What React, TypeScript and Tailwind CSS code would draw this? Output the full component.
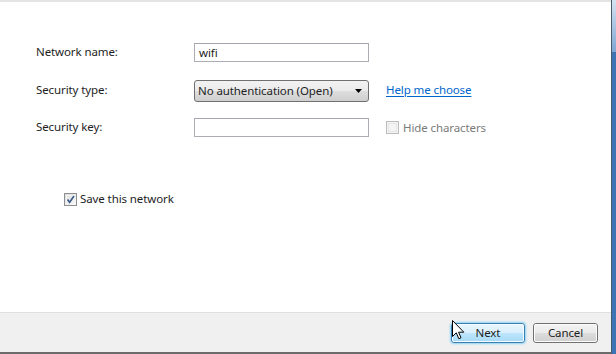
import React from "react";

const font = { fontFamily: '"Noto Sans", "Open Sans", sans-serif' };

function Checkbox({ checked, disabled }: { checked?: boolean; disabled?: boolean }) {
  return (
    <div
      className={
        "w-[13px] h-[13px] border flex items-center justify-center " +
        (disabled ? "border-[#bcbcbc] bg-[#f4f4f4]" : "border-[#8e8f8f] bg-gradient-to-br from-[#dcdcdc] to-[#fbfbfb]")
      }
    >
      <div className={"w-[9px] h-[9px] border " + (disabled ? "border-[#e6e6e6]" : "border-[#f4f4f4]")}>
        {checked && (
          <svg width="9" height="9" viewBox="0 0 9 9" className="block -mt-[1px] -ml-[1px]">
            <path d="M1.5 4.5 L3.6 7.3 L8 1" fill="none" stroke="#3c5c8a" strokeWidth="1.6" />
          </svg>
        )}
      </div>
    </div>
  );
}

export default function App() {
  return (
    <div className="w-[616px] h-[354px] flex overflow-hidden text-[11.5px] tracking-[-0.1px] text-[#1e1e1e] relative" style={font}>
      <div className="flex-1 flex flex-col bg-white">
        <div className="h-[2px] bg-[#e4e4e4]" />
        <div className="flex-1 flex flex-col pl-[36px] pt-[41px]">
          <div className="flex items-center h-[19px]">
            <div className="w-[158px] -mt-[2px]">Network name:</div>
            <div className="w-[175px] h-[19px] border border-[#abadb3] border-t-[#a3a6ad] flex items-center pl-[4px]">wifi</div>
          </div>
          <div className="flex items-center h-[22px] mt-[18px]">
            <div className="w-[158px] -mt-[3px]">Security type:</div>
            <div className="w-[175px] h-[22px] border border-[#707070] rounded-[3px] flex items-center pl-[3px] pr-[6px] bg-[linear-gradient(#f2f2f2_0%,#ebebeb_50%,#dddddd_51%,#cfcfcf_100%)]">
              <span className="flex-1">No authentication (Open)</span>
              <svg width="7" height="4" viewBox="0 0 7 4">
                <path d="M0 0 H7 L3.5 4 Z" fill="#000" />
              </svg>
            </div>
            <a className="ml-[17px] -mt-[3px] text-[#0066cc] underline underline-offset-[2px]">Help me choose</a>
          </div>
          <div className="flex items-center h-[19px] mt-[16px]">
            <div className="w-[158px] -mt-[2px]">Security key:</div>
            <div className="w-[175px] h-[19px] border border-[#abadb3] border-t-[#a3a6ad]" />
            <div className="ml-[17px] flex items-center gap-[4px] text-[#7b7b7b]">
              <Checkbox disabled />
              <span>Hide characters</span>
            </div>
          </div>
          <div className="flex items-center h-[16px] mt-[54px] ml-[28px] gap-[3px]">
            <Checkbox checked />
            <span>Save this network</span>
          </div>
        </div>
        <div className="h-[40px] bg-[#f0f0f0] border-t border-[#dfdfdf] flex items-start justify-end pt-[10px] pr-[13px] gap-[8px]">
          <div className="w-[74px] h-[20px] rounded-[3px] border border-[#3c7fb1] shadow-[0_0_2px_1px_#8fd3f5] bg-[linear-gradient(#eaf6fd_0%,#d9f0fc_50%,#bee6fd_51%,#a7d9f5_100%)] flex items-center justify-center">
            <div className="w-full h-full rounded-[2px] border border-[#f5fbfe] flex items-center justify-center">Next</div>
          </div>
          <div className="w-[65px] h-[20px] rounded-[3px] border border-[#707070] bg-[linear-gradient(#f2f2f2_0%,#ebebeb_50%,#dddddd_51%,#cfcfcf_100%)] flex items-center justify-center">
            <div className="w-full h-full rounded-[2px] border border-[#fcfcfc] flex items-center justify-center">Cancel</div>
          </div>
        </div>
        <div className="h-[2px] bg-[#6b6b6b]" />
      </div>
      <div className="w-[5px] flex">
        <div className="w-[1px] bg-[#4a5a6e]" />
        <div className="flex-1 flex flex-col">
          <div className="h-[52px] bg-[linear-gradient(#d6e3f1,#7fa6d3)]" />
          <div className="flex-1 bg-[#3d74b3]" />
        </div>
      </div>
      <svg className="absolute left-[452px] top-[320px]" width="13" height="21" viewBox="0 0 13 21">
        <path d="M0.5 0.5 V16.5 L4.3 12.8 L6.8 18.7 L9 17.8 L6.6 12.2 H11.8 Z" fill="#fff" stroke="#000" strokeWidth="1" strokeLinejoin="round" />
      </svg>
    </div>
  );
}
